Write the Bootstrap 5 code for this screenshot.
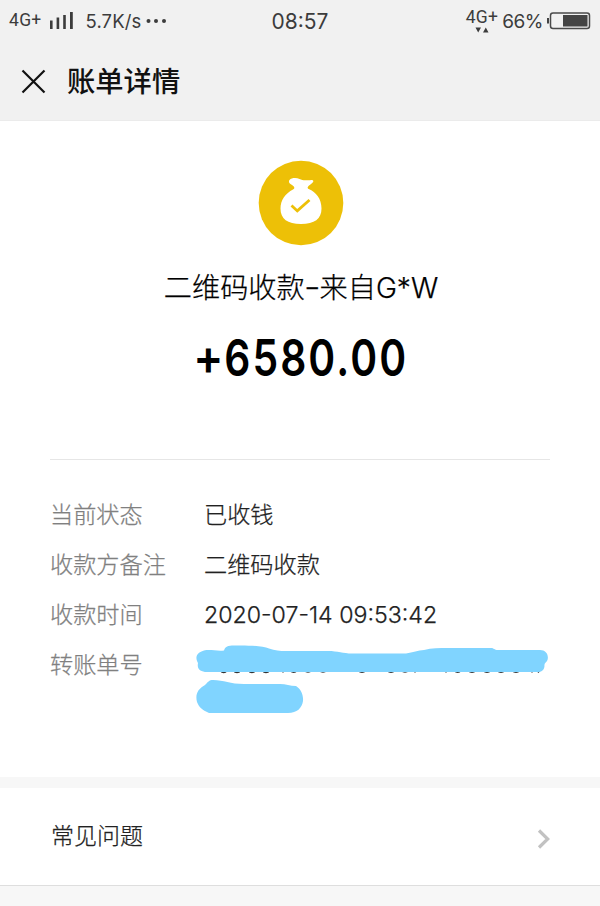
<!DOCTYPE html>
<html lang="zh-CN">
<head>
    <meta charset="UTF-8">
    <meta name="viewport" content="width=device-width, initial-scale=1.0">
    <title>账单详情</title>
    <link href="https://cdn.jsdelivr.net/npm/bootstrap@5.3.2/dist/css/bootstrap.min.css" rel="stylesheet">
    <style>
        body {
            font-family: Inter, "Noto Sans CJK SC", sans-serif;
            font-weight: 300;
            background: #f7f7f7;
            color: #222;
            overflow: hidden;
        }
        svg { display: block; flex: none; }
        .top-area { background: #f1f1f1; height: 121px; border-bottom: 1px solid #ebebeb; }
        .status-bar { height: 41px; padding: 1px 9px 0 9px; color: #3c3c3c; font-weight: 400; line-height: 1; }
        .status-side { width: 200px; }
        .net-type { font-family: Roboto, sans-serif; font-size: 17.5px; letter-spacing: .3px; }
        .net-speed { font-size: 18.5px; letter-spacing: .1px; margin-left: 12px; }
        .clock { font-size: 21px; }
        .percent { font-size: 19px; letter-spacing: -.5px; }
        .title-bar { height: 80px; padding-left: 21px; }
        .page-title { font-size: 28.3px; font-weight: 500; color: #111; line-height: 40px; margin-left: 21px; padding-top: 2px; }
        .summary { height: 338px; padding: 39px 0 0 2px; color: #000; }
        .payee { font-size: 28.2px; line-height: 40px; margin-top: 22px; white-space: nowrap; }
        .payee, .detail-row, .faq { -webkit-text-stroke: .25px currentColor; }
        .payee-mark { display: inline-block; transform: scaleX(1.3) translateY(-1px); margin: 0 1px; }
        .amount { font-size: 51px; font-weight: 600; line-height: 60px; margin-top: 20px; letter-spacing: 2.6px; transform: scaleX(.8); }
        .amount-sign { display: inline-block; transform: scale(1.1, .95) translateY(-1px); }
        .detail { height: 318px; margin: 0 50px; border-top: 1px solid #e6e6e6; padding-top: 30px; }
        .detail-row { height: 50px; font-size: 23.2px; line-height: 50px; white-space: nowrap; }
        .detail-name { width: 154px; color: #808080; }
        .scribble { left: -10px; top: -2px; }
        .faq { height: 98px; margin-top: 11px; padding: 0 49px 0 51px; font-size: 23px; border-bottom: 1px solid #dedede; }
    </style>
</head>
<body>
    <!-- Status bar and title -->
    <header class="top-area">
        <div class="status-bar d-flex align-items-center justify-content-between">
            <div class="status-side d-flex align-items-center">
                <span class="net-type">4G+</span>
                <svg class="ms-2" width="24" height="18" viewBox="0 0 24 18" fill="#3c3c3c">
                    <path d="M0 8.500h2.600V17H0zM6.600 5.500h2.600v11.500H6.600zM13.200 3h2.600v14h-2.600zM20 0h2.800v17H20z"/>
                </svg>
                <span class="net-speed">5.7K/s</span>
                <svg class="ms-1" width="22" height="6" viewBox="0 0 22 6" fill="#3c3c3c">
                    <circle cx="3.500" cy="3" r="2"/><circle cx="11" cy="3" r="2"/><circle cx="19" cy="3" r="2"/>
                </svg>
            </div>
            <span class="clock">08:57</span>
            <div class="status-side d-flex align-items-center justify-content-end">
                <div class="me-1">
                    <div class="net-type">4G+</div>
                    <svg class="ms-2" width="16" height="6" viewBox="0 0 16 6" fill="#3c3c3c">
                        <path d="M1.500 0.500h5.500L4.200 5.500zM9 5.500h5.500L11.800 0.500z"/>
                    </svg>
                </div>
                <span class="percent">66%</span>
                <svg class="ms-1" width="44" height="18" viewBox="0 0 44 18">
                    <rect x="3.500" y="1" width="39" height="15.500" rx="2.500" fill="none" stroke="#4a4a4a" stroke-width="1.500"/>
                    <path d="M16 3h24.500v11.500H16zM0 6h2v5.500H0z" fill="#444"/>
                </svg>
            </div>
        </div>
        <div class="title-bar d-flex align-items-center">
            <svg width="25" height="25" viewBox="0 0 25 25" fill="none" stroke="#111" stroke-width="2.200">
                <path d="M1.500 1.500l22 22M23.500 1.500l-22 22"/>
            </svg>
            <div class="page-title">账单详情</div>
        </div>
    </header>

    <main class="bg-white">
        <!-- Amount -->
        <section class="summary d-flex flex-column align-items-center">
            <svg width="86" height="86" viewBox="0 0 86 86">
                <circle cx="43" cy="43" r="42.300" fill="#edc007"/>
                <path d="M31.500 20c2-2.300 7-2.500 10-1 3.500 1.700 6 1.300 12 .9 2.300-.1 2.300 1.500.9 2.900-1.600 1.600-4 3-4.700 4.400-.2.700.2 1.300 1 1.900C58 32 63.500 39 63.500 48.500c0 10.500-7 15.500-20.500 15.500S22.500 59 22.500 48.500c0-8.500 5-15 12.500-19 1.300-.7 1.500-1.500 1.200-2.300-.5-1.500-2.200-2.300-3.700-3.300-1.400-.8-2.100-2.500-1-3.900z" fill="#fff"/>
                <path d="M33.500 45.500l5.800 5.400L51.500 40" fill="none" stroke="#edc007" stroke-width="2.800"/>
            </svg>
            <div class="payee">二维码收款<span class="payee-mark">-</span>来自G*W</div>
            <div class="amount"><span class="amount-sign">+</span>6580.00</div>
        </section>

        <!-- Transfer details -->
        <section class="detail">
            <div class="detail-row d-flex">
                <div class="detail-name">当前状态</div>
                <div>已收钱</div>
            </div>
            <div class="detail-row d-flex">
                <div class="detail-name">收款方备注</div>
                <div>二维码收款</div>
            </div>
            <div class="detail-row d-flex">
                <div class="detail-name">收款时间</div>
                <div>2020-07-14 09:53:42</div>
            </div>
            <div class="detail-row d-flex">
                <div class="detail-name">转账单号</div>
                <div class="position-relative">
                    <!-- number hidden by marker strokes -->
                    <svg class="scribble position-absolute" width="360" height="80" viewBox="194 638 360 80">
                        <path d="M220 670.500q4 4 7 0M233 670.500q4 4 8 0M248 670.500q4 4 8 0M262 670.500q4 4 8 0M283 670v2.500M290 670.500q4 3.500 7 0M304 670.500q4 3 8 0M319 670.500q4 3 8 0M358 670.500q4 3.500 8 0M387 670.500q4 3.500 8 0M401 670.500q4 3 8 0M415 670v2.500M446 670v2.500M454 670.500q4 3.500 7 0M468 670.500q4 3.500 8 0M483 670.500q4 3.500 8 0M497 670.500q4 3.500 8 0M512 670.500q4 3.500 8 0M532 670v2.500M538 672.500l2-3" fill="none" stroke="#333" stroke-width="1.500"/>
                        <path d="M204 650.500C210 649 217 651.500 224 650.500C225 646.500 228 645.500 234 645.500C248 645 262 646 269 648.500C277 651.500 283 651 292 651H328C338 651 343 653.500 352 653.500H406C413 652.500 418 650.500 424 650C432 648 439 648 448 648H491C494 648 494 650 498 650H540C546 650 549 655 547.500 660C546 663 544 663 544.500 666C544 670 542 672 537 672H205C199 671 197 668 198 663C195.500 659 195 653 204 650.500z" fill="#80d4ff"/>
                        <path d="M213 680C224 680 230 684 244 684H280C286 684 290 686 296 686C301 689 303.500 695 303 701C302 708 297 713 288 713H209C202 710 199 707 197 702C195 694 198 689 205 685C208 682 209 680 213 680z" fill="#80d4ff"/>
                    </svg>
                </div>
            </div>
        </section>
    </main>

    <section class="faq bg-white d-flex align-items-center justify-content-between">
        <span>常见问题</span>
        <svg class="mt-1" width="14" height="20" viewBox="0 0 14 20" fill="none" stroke="#c2c2c2" stroke-width="3.200">
            <path d="M2 1.500l8.700 8.500L2 18.500"/>
        </svg>
    </section>
    <script src="https://cdn.jsdelivr.net/npm/bootstrap@5.3.2/dist/js/bootstrap.bundle.min.js"></script>
</body>
</html>
